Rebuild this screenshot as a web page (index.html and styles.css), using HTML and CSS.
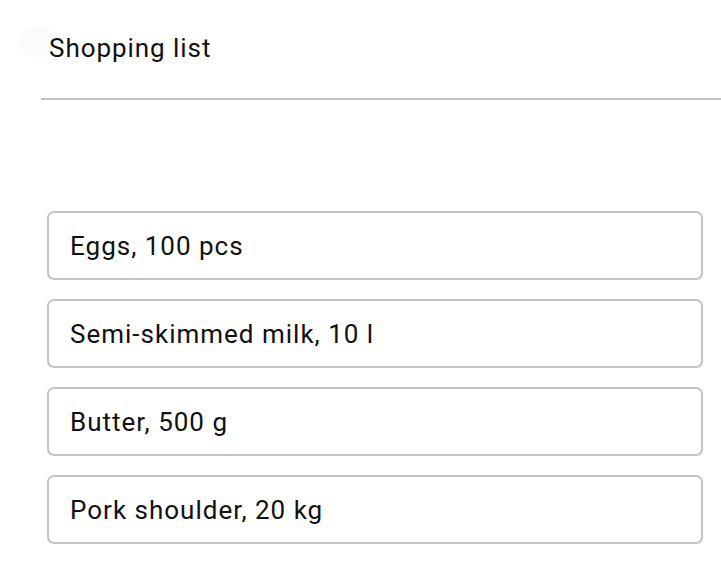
FILE: index.html
```html
<!DOCTYPE HTML>
<html>
<head>
	<meta charset="utf-8" />
	<title>Shopping list</title>
	<link rel="stylesheet" href="styles.css">
</head>
<body>
	<div class="header">
		<span class="ripple"></span>
		<h1>Shopping list</h1>
	</div>
	<ul class="list">
		<li>Eggs, 100 pcs</li>
		<li>Semi-skimmed milk, 10 l</li>
		<li>Butter, 500 g</li>
		<li>Pork shoulder, 20 kg</li>
	</ul>
</body>
</html>
```

FILE: styles.css
```css
body {
	font-family: Roboto, 'Liberation Sans', sans-serif;
	color: #111;
	background: #fff;
	margin: 0;
	padding: 0;
}
.header {
	position: relative;
	margin-left: 41px;
	padding-top: 30px;
	height: 68px;
	border-bottom: 2px solid #c2c2c2;
}
.header h1 {
	position: relative;
	font-size: 26px;
	font-weight: 400;
	letter-spacing: 0.95px;
	line-height: 36px;
	margin: 0 0 0 8px;
}
.ripple {
	position: absolute;
	left: -22px;
	top: 26px;
	width: 40px;
	height: 32px;
	border-radius: 50%;
	background: #fbfbfb;
}
.list {
	list-style: none;
	margin: 111px 18px 0 47px;
	padding: 0;
	display: flex;
	flex-direction: column;
	gap: 19px;
}
.list > li {
	border: 2px solid #c4c4c4;
	border-radius: 7px;
	height: 65px;
	padding: 0 0 0 21px;
	display: flex;
	align-items: center;
	font-size: 26px;
	letter-spacing: 1px;
}
```
